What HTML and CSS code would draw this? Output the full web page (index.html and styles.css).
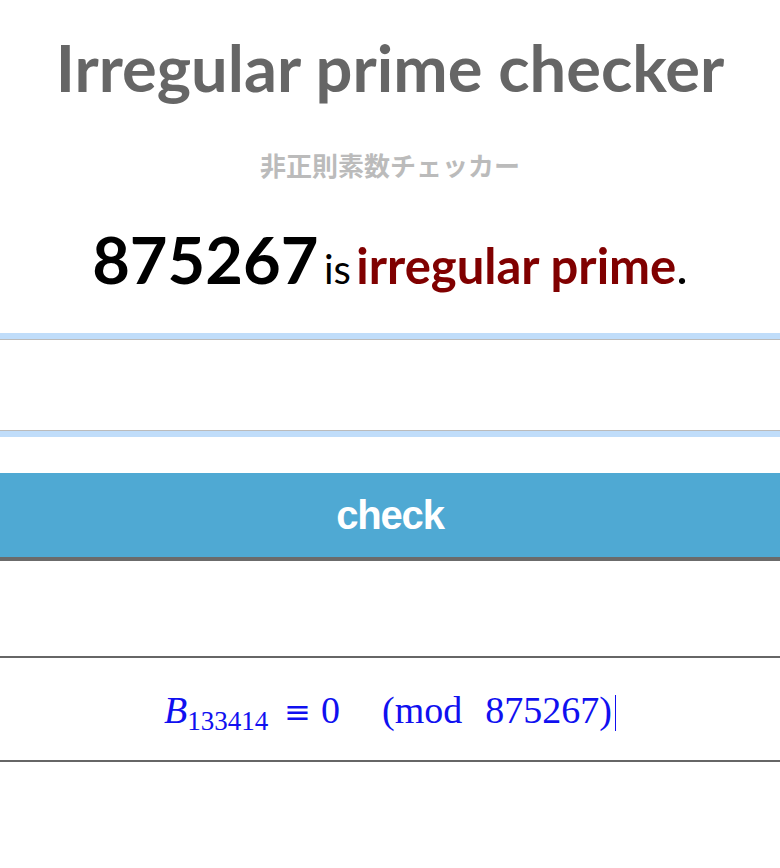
FILE: index.html
```html
<!DOCTYPE html>
<html lang="en">
<head>
  <meta charset="UTF-8" />
  <meta name="viewport" content="width=device-width, initial-scale=1.0"/>
  <title>Irregular prime checker</title>
  <link rel="stylesheet" href="styles.css">
</head>
<body>

  <h1>Irregular prime checker</h1>
  <p class="subtitle">非正則素数チェッカー</p>

  <p class="verdict">
    <span class="num">875267</span> <span class="is">is</span> <span class="kind">irregular prime</span>.
  </p>

  <form class="checker" onsubmit="return false">
    <input type="text" class="num-input" aria-label="number">
    <button type="submit" class="check-btn">check</button>
  </form>

  <div class="proof">
    <span class="math">
      <i class="bern">B</i><sub>133414</sub><span class="equiv">&equiv;</span><span class="zero">0</span><span class="mod">(mod</span><span class="modulus">875267)</span><span class="caret"></span>
    </span>
  </div>

</body>
</html>
```

FILE: styles.css
```css
:root {
  --title: #666;
  --sub: #bbb;
  --wine: #800000;
  --btn: #4fa9d3;
  --rule: #666;
  --math: #1010f0;
}

body {
  margin: 0;
  font-family: Lato, "Noto Sans", sans-serif;
  background-color: #fff;
  text-align: center;
}

h1 {
  margin: 28px 0 0;
  font-size: 65px;
  font-weight: bold;
  line-height: 1.2;
  color: var(--title);
}

.subtitle {
  margin: 43px 0 0;
  font-family: "Noto Sans CJK JP", sans-serif;
  font-size: 26px;
  font-weight: bold;
  line-height: 31px;
  color: var(--sub);
}

.verdict {
  margin: 47px 0 0;
  font-size: 49px;
  line-height: 1;
  word-spacing: -7px;
  color: #000;
}

.num {
  font-size: 65px;
  font-weight: bold;
}

.is {
  font-size: 40px;
}

.kind {
  font-weight: bold;
  word-spacing: 0;
  color: var(--wine);
}

.checker {
  margin-top: 47px;
}

.num-input {
  display: block;
  width: 100%;
  height: 92px;
  box-sizing: border-box;
  margin: 0;
  border: 1px solid #bbb;
  border-left: none;
  border-right: none;
  box-shadow: 0 0 0 6px #c0ddfa;
  outline: none;
  font-size: 32px;
}

.check-btn {
  display: block;
  width: 100%;
  height: 88px;
  margin-top: 42px;
  padding: 0;
  border: none;
  border-bottom: 4px solid #6b6b6b;
  background-color: var(--btn);
  color: #fff;
  font-family: "Liberation Sans", Arial, sans-serif;
  font-size: 40px;
  font-weight: bold;
  letter-spacing: -1.2px;
  cursor: pointer;
}

.proof {
  margin-top: 95px;
  height: 102px;
  border-top: 2px solid var(--rule);
  border-bottom: 2px solid var(--rule);
  display: flex;
  align-items: center;
  justify-content: center;
}

.math {
  padding-top: 6px;
  font-family: "Liberation Serif", "Times New Roman", serif;
  font-size: 38px;
  color: var(--math);
  white-space: nowrap;
}

.bern {
  font-style: italic;
}

.math sub {
  font-size: 27px;
  vertical-align: -7px;
}

.equiv {
  margin: 0 10px 0 16px;
  font-family: "DejaVu Sans", sans-serif;
  font-size: 32px;
}

.mod {
  margin-left: 42px;
}

.modulus {
  margin-left: 23px;
}

.caret {
  display: inline-block;
  width: 1px;
  height: 36px;
  margin-left: 3px;
  vertical-align: -8px;
  background-color: var(--math);
}
```
